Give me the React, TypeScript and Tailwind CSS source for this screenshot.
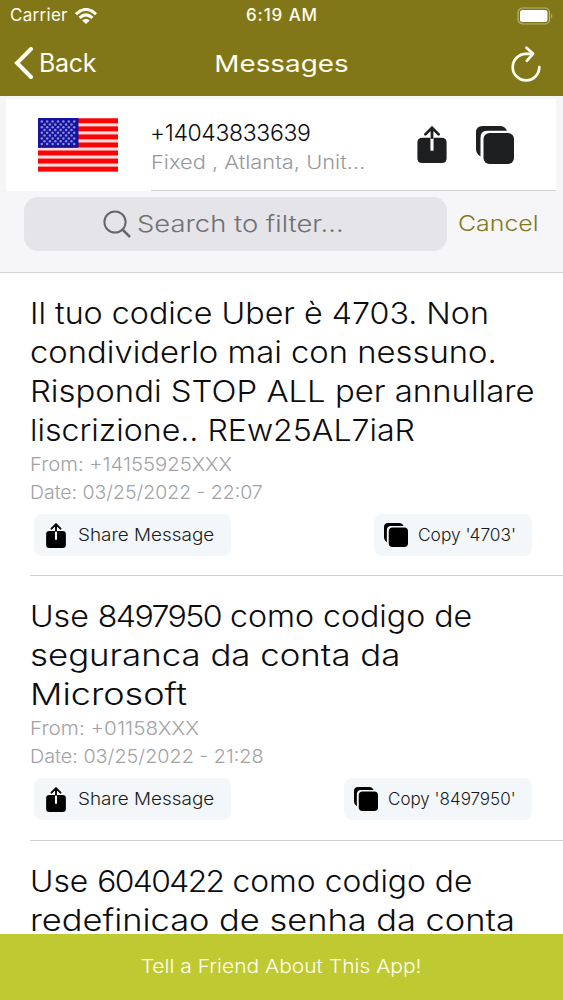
import type { ReactNode } from 'react';

type Line = { text: string; stretch: string };
type Message = {
  lines: Line[];
  from: Line;
  date: Line;
  copy: Line;
  copyWidth: string;
  height: string;
};

const messages: Message[] = [
  {
    lines: [
      { text: 'Il tuo codice Uber è 4703. Non', stretch: 'scale-x-[1.074]' },
      { text: 'condividerlo mai con nessuno.', stretch: 'scale-x-[1.093]' },
      { text: 'Rispondi STOP ALL per annullare', stretch: 'scale-x-[1.096]' },
      { text: 'liscrizione.. REw25AL7iaR', stretch: 'scale-x-[1.07]' },
    ],
    from: { text: 'From: +14155925XXX', stretch: 'scale-x-[1.067]' },
    date: { text: 'Date: 03/25/2022 - 22:07', stretch: 'scale-x-[1.023]' },
    copy: { text: "Copy '4703'", stretch: 'scale-x-[1.02]' },
    copyWidth: 'w-[158px]',
    height: 'h-[303px]',
  },
  {
    lines: [
      { text: 'Use 8497950 como codigo de', stretch: 'scale-x-[1.07]' },
      { text: 'seguranca da conta da', stretch: 'scale-x-[1.16]' },
      { text: 'Microsoft', stretch: 'scale-x-[1.2]' },
    ],
    from: { text: 'From: +01158XXX', stretch: 'scale-x-[1.09]' },
    date: { text: 'Date: 03/25/2022 - 21:28', stretch: 'scale-x-[1.04]' },
    copy: { text: "Copy '8497950'", stretch: 'scale-x-100' },
    copyWidth: 'w-[188px]',
    height: 'h-[265px]',
  },
];

function ShareIcon({ className }: { className: string }) {
  return (
    <svg viewBox="0 0 30 38" className={className} fill="none">
      <path
        d="M5 12H13.4V25.5H16.6V12H25Q30 12 30 17V33Q30 38 25 38H5Q0 38 0 33V17Q0 12 5 12Z"
        fill="currentColor"
      />
      <path d="M15 12V2M8.2 8.6L15 1.8L21.8 8.6" stroke="currentColor" strokeWidth="2.8" strokeLinecap="round" />
    </svg>
  );
}

function CopyIcon({ className }: { className: string }) {
  return (
    <svg viewBox="0 0 38 38" className={className} fill="currentColor">
      <rect x="7.5" y="7" width="30.5" height="31" rx="6" />
      <path d="M6.5 0H24Q29 0 31 4.7H11Q4.5 4.7 4.5 12V30.5Q0 28 0 23V6.5Q0 0 6.5 0Z" />
    </svg>
  );
}

function Flag() {
  const stars: ReactNode[] = [];
  for (let row = 0; row < 9; row++) {
    const count = row % 2 === 0 ? 7 : 6;
    for (let i = 0; i < count; i++) {
      stars.push(
        <circle
          key={`${row}-${i}`}
          cx={3.8 + i * 5.4 + (row % 2 === 0 ? 0 : 2.7)}
          cy={3.6 + row * 2.8}
          r="1.25"
          fill="#8d8dd6"
        />,
      );
    }
  }
  return (
    <svg viewBox="0 0 80 54" className="h-[54px] w-20 shrink-0">
      <rect width="80" height="54" fill="#ffdcdc" />
      {[0, 1, 2, 3, 4, 5, 6].map((i) => (
        <rect key={i} y={i * 8.05 + 0.3} width="80" height="5" fill="#f90507" />
      ))}
      <rect width="40.5" height="29.8" fill="#1512a0" />
      {stars}
    </svg>
  );
}

/* Runs of seven digits are set tighter than the words around them. */
function LineText({ text }: { text: string }) {
  return (
    <>
      {text.split(/(\d{7})/).map((part, i) =>
        /^\d{7}$/.test(part) ? (
          <span key={i} className="tracking-[-1.5px]">
            {part}
          </span>
        ) : (
          part
        ),
      )}
    </>
  );
}

function MessageBody({ lines }: { lines: Line[] }) {
  return (
    <div className="text-[30px] leading-[39px]">
      {lines.map((line) => (
        <p key={line.text} className={`w-max origin-left ${line.stretch}`}>
          <LineText text={line.text} />
        </p>
      ))}
    </div>
  );
}

function MessageRow({ message }: { message: Message }) {
  return (
    <article
      className={`ml-[30px] flex shrink-0 flex-col border-b border-[#d2d2d3] pt-[21px] whitespace-nowrap ${message.height}`}
    >
      <MessageBody lines={message.lines} />
      <div className="pt-px text-[19px] leading-[28px] text-[#a3a3a6]">
        <p className={`w-max origin-left ${message.from.stretch}`}>{message.from.text}</p>
        <p className={`w-max origin-left ${message.date.stretch}`}>{message.date.text}</p>
      </div>
      <div className="mt-[7px] mr-[31px] ml-1 flex justify-between text-[17px] text-[#18191b]">
        <button className="flex h-[42px] w-[197px] items-center rounded-lg bg-[#f4f7f9] pl-[12px]">
          <ShareIcon className="h-[25px] w-5 text-black" />
          <span className="ml-3 origin-left scale-x-[1.11] pt-px">Share Message</span>
        </button>
        <button className={`flex h-[42px] items-center rounded-lg bg-[#f4f7f9] pl-[10px] ${message.copyWidth}`}>
          <CopyIcon className="size-6 text-black" />
          <span className={`ml-[10px] origin-left pt-px ${message.copy.stretch}`}>{message.copy.text}</span>
        </button>
      </div>
    </article>
  );
}

export default function App() {
  return (
    <div className="flex h-[1000px] w-[563px] flex-col overflow-hidden bg-white font-['Inter',sans-serif] font-light whitespace-nowrap text-[#0c0c0e]">
      <header className="flex h-24 shrink-0 flex-col bg-[#827718] text-[#fffdf0]">
        <div className="grid h-8 grid-cols-3 items-center pr-[9px] pl-[10px] text-[17px]">
          <div className="flex items-center gap-[7px] font-normal">
            <span className="tracking-[0.3px]">Carrier</span>
            <svg viewBox="0 0 22 16" className="h-4 w-[22px]" fill="none" stroke="currentColor" strokeWidth="3">
              <path d="M1 6.2Q11-3.3 21 6.2" />
              <path d="M4.6 9.9Q11 3.9 17.4 9.9" />
              <path d="M7.2 12.4Q11 9 14.8 12.4L11 16Z" fill="currentColor" stroke="none" />
            </svg>
          </div>
          <span className="text-center font-medium tracking-[0.9px]">6:19 AM</span>
          <svg viewBox="0 0 37 18" className="h-[18px] w-[37px] justify-self-end">
            <rect x="1" y="1" width="31.5" height="16" rx="4.5" fill="none" stroke="#bbb37b" strokeWidth="1.2" />
            <rect x="3" y="3" width="27.5" height="12" rx="2.5" fill="#fff" />
            <path d="M34.2 6.5Q36.5 9 34.2 11.5Z" fill="#bbb37b" />
          </svg>
        </div>
        <div className="grid h-16 grid-cols-3 items-center pr-[22px] pl-[14px]">
          <button className="flex items-center gap-[6px] pb-[2px] text-[25px] font-normal">
            <svg viewBox="0 0 19 32" className="h-8 w-[19px]" fill="none" stroke="currentColor" strokeWidth="4">
              <path d="M17 2L3 16L17 30" strokeLinecap="round" />
            </svg>
            <span className="pt-[2px] tracking-[-0.35px]">Back</span>
          </button>
          <h1 className="scale-x-[1.21] pt-px pl-[6px] text-center text-[23px] font-normal">Messages</h1>
          <button aria-label="Reload" className="justify-self-end pb-px">
            <svg viewBox="0 0 30 36" className="h-9 w-[30px]" fill="none" stroke="currentColor" strokeWidth="2.7">
              <path d="M21.5 7.8H15A13.3 13.3 0 1 0 28.3 21" strokeLinecap="round" />
              <path d="M15.5 1.7L22 7.8L15.8 14.8" strokeLinecap="round" strokeLinejoin="round" />
            </svg>
          </button>
        </div>
      </header>

      <section className="flex h-[177px] shrink-0 flex-col border-b border-[#d3d3d5] bg-[#f6f5f8] pt-[3px]">
        <div className="mr-[7px] ml-[6px] flex h-[92px] items-stretch bg-white pl-8">
          <div className="flex items-center">
            <Flag />
          </div>
          <div className="ml-[33px] flex flex-1 items-center border-b border-[#d3d3d5]">
            <div className="w-[266px] pt-[5px]">
              <p className="-ml-px text-[23px] leading-[30px] tracking-[-0.35px]">+14043833639</p>
              <p className="w-max origin-left scale-x-[1.15] text-[19px] leading-[29px] text-[#98989c]">
                Fixed , Atlanta, Unit…
              </p>
            </div>
            <ShareIcon className="h-[37px] w-[30px] text-[#1e1f21]" />
            <CopyIcon className="ml-[29px] h-[38px] w-[38px] text-[#1e1f21]" />
          </div>
        </div>
        <div className="mt-[6px] ml-6 flex h-[54px] items-center">
          <div className="flex h-full w-[423px] items-center rounded-[14px] bg-[#e5e4e8] pl-[79px] text-[#707074]">
            <svg viewBox="0 0 28 28" className="size-7" fill="none" stroke="#66666a" strokeWidth="2">
              <circle cx="12" cy="12" r="10.6" />
              <path d="M19.6 19.6L27 27" strokeWidth="2.5" />
            </svg>
            <span className="ml-[6px] origin-left scale-x-[1.19] text-[23px]">Search to filter...</span>
          </div>
          <button className="ml-[11px] origin-left scale-x-[1.13] pb-px text-[22px] text-[#7d7a1d]">Cancel</button>
        </div>
      </section>

      <main className="flex min-h-0 flex-1 flex-col overflow-hidden">
        {messages.map((message) => (
          <MessageRow key={message.from.text} message={message} />
        ))}
        <article className="ml-[30px] shrink-0 pt-[21px]">
          <MessageBody
            lines={[
              { text: 'Use 6040422 como codigo de', stretch: 'scale-x-[1.06]' },
              { text: 'redefinicao de senha da conta', stretch: 'scale-x-[1.147]' },
            ]}
          />
        </article>
      </main>

      <footer className="flex h-[66px] shrink-0 items-center justify-center bg-[#bfc932] pt-px text-[19px] text-[#fffff0]">
        <span className="scale-x-[1.105]">Tell a Friend About This App!</span>
      </footer>
    </div>
  );
}
